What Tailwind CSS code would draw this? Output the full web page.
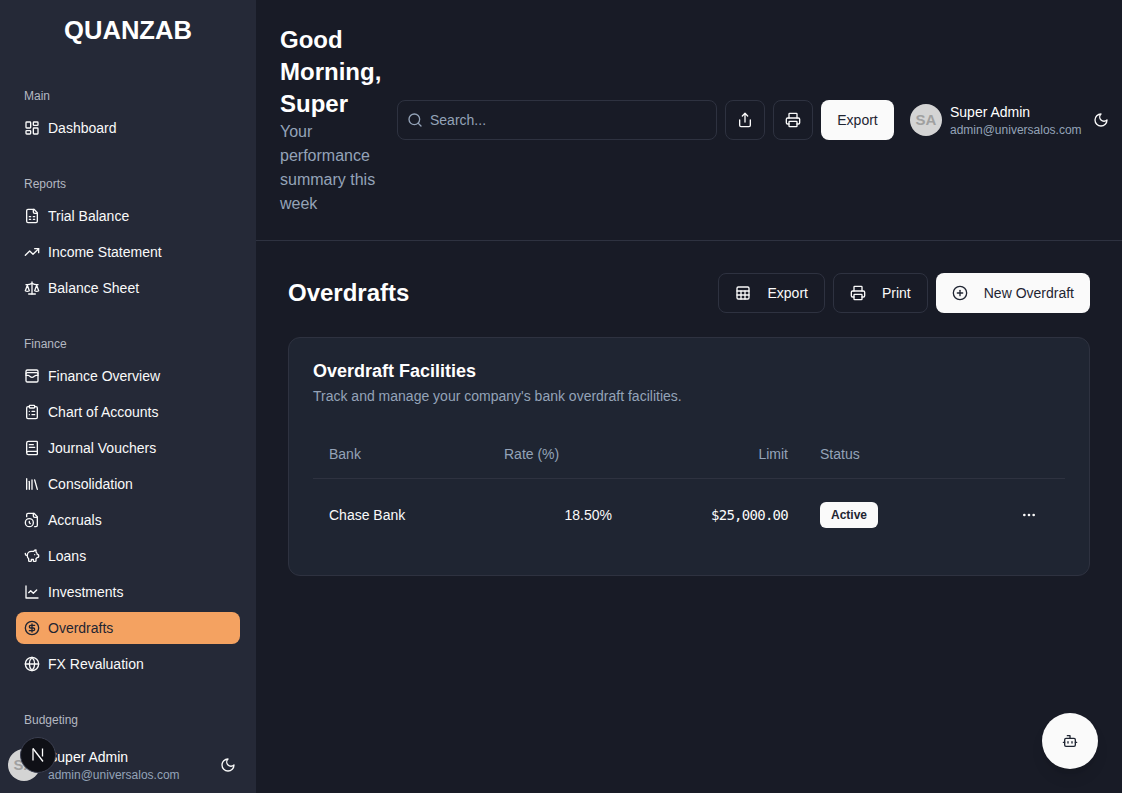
<!DOCTYPE html>
<html>

<head>
    <script src="https://cdn.jsdelivr.net/npm/@tailwindcss/browser@4"></script>
    <title>Overdrafts</title>
</head>

<body class="bg-[#181b26] font-['Liberation_Sans',sans-serif] text-[#fafafa]">
    <div class="relative flex h-[793px] w-[1122px] overflow-hidden">

        <!-- sidebar -->
        <aside class="flex h-full w-[256px] shrink-0 flex-col bg-[#252937]">
            <div class="h-[80px] shrink-0 pt-[14px] text-center text-[25.6px] font-bold leading-8 text-white">QUANZAB</div>

            <div class="flex min-h-0 flex-1 flex-col gap-6 overflow-hidden px-4">
                <div>
                    <div class="flex h-8 items-center px-2 text-xs font-medium text-[#b4b8c2]">Main</div>
                    <div class="flex flex-col gap-1">
                        <a class="flex h-8 items-center gap-2 rounded-lg px-2 text-sm font-medium">
                            <svg class="size-4" viewBox="0 0 24 24" fill="none" stroke="currentColor" stroke-width="2" stroke-linecap="round" stroke-linejoin="round"><rect width="7" height="9" x="3" y="3" rx="1"/><rect width="7" height="5" x="14" y="3" rx="1"/><rect width="7" height="9" x="14" y="12" rx="1"/><rect width="7" height="5" x="3" y="16" rx="1"/></svg>
                            Dashboard
                        </a>
                    </div>
                </div>

                <div>
                    <div class="flex h-8 items-center px-2 text-xs font-medium text-[#b4b8c2]">Reports</div>
                    <div class="flex flex-col gap-1">
                        <a class="flex h-8 items-center gap-2 rounded-lg px-2 text-sm font-medium">
                            <svg class="size-4" viewBox="0 0 24 24" fill="none" stroke="currentColor" stroke-width="2" stroke-linecap="round" stroke-linejoin="round"><path d="M15 2H6a2 2 0 0 0-2 2v16a2 2 0 0 0 2 2h12a2 2 0 0 0 2-2V7Z"/><path d="M14 2v4a2 2 0 0 0 2 2h4"/><path d="M8 13h2"/><path d="M14 13h2"/><path d="M8 17h2"/><path d="M14 17h2"/></svg>
                            Trial Balance
                        </a>
                        <a class="flex h-8 items-center gap-2 rounded-lg px-2 text-sm font-medium">
                            <svg class="size-4" viewBox="0 0 24 24" fill="none" stroke="currentColor" stroke-width="2" stroke-linecap="round" stroke-linejoin="round"><polyline points="22 7 13.5 15.5 8.5 10.5 2 17"/><polyline points="16 7 22 7 22 13"/></svg>
                            Income Statement
                        </a>
                        <a class="flex h-8 items-center gap-2 rounded-lg px-2 text-sm font-medium">
                            <svg class="size-4" viewBox="0 0 24 24" fill="none" stroke="currentColor" stroke-width="2" stroke-linecap="round" stroke-linejoin="round"><path d="m16 16 3-8 3 8c-.87.65-1.92 1-3 1s-2.13-.35-3-1Z"/><path d="m2 16 3-8 3 8c-.87.65-1.92 1-3 1s-2.13-.35-3-1Z"/><path d="M7 21h10"/><path d="M12 3v18"/><path d="M3 7h2c2 0 5-1 7-2 2 1 5 2 7 2h2"/></svg>
                            Balance Sheet
                        </a>
                    </div>
                </div>

                <div>
                    <div class="flex h-8 items-center px-2 text-xs font-medium text-[#b4b8c2]">Finance</div>
                    <div class="flex flex-col gap-1">
                        <a class="flex h-8 items-center gap-2 rounded-lg px-2 text-sm font-medium">
                            <svg class="size-4" viewBox="0 0 24 24" fill="none" stroke="currentColor" stroke-width="2" stroke-linecap="round" stroke-linejoin="round"><rect width="18" height="18" x="3" y="3" rx="2"/><path d="M3 9a2 2 0 0 1 2-2h14a2 2 0 0 1 2 2"/><path d="M3 11h3c.8 0 1.6.3 2.1.9l1.1.9c1.6 1.6 4.1 1.6 5.7 0l1.1-.9c.5-.5 1.3-.9 2.1-.9H21"/></svg>
                            Finance Overview
                        </a>
                        <a class="flex h-8 items-center gap-2 rounded-lg px-2 text-sm font-medium">
                            <svg class="size-4" viewBox="0 0 24 24" fill="none" stroke="currentColor" stroke-width="2" stroke-linecap="round" stroke-linejoin="round"><rect width="8" height="4" x="8" y="2" rx="1" ry="1"/><path d="M16 4h2a2 2 0 0 1 2 2v14a2 2 0 0 1-2 2H6a2 2 0 0 1-2-2V6a2 2 0 0 1 2-2h2"/><path d="M12 11h4"/><path d="M12 16h4"/><path d="M8 11h.01"/><path d="M8 16h.01"/></svg>
                            Chart of Accounts
                        </a>
                        <a class="flex h-8 items-center gap-2 rounded-lg px-2 text-sm font-medium">
                            <svg class="size-4" viewBox="0 0 24 24" fill="none" stroke="currentColor" stroke-width="2" stroke-linecap="round" stroke-linejoin="round"><path d="M4 19.5v-15A2.5 2.5 0 0 1 6.5 2H19a1 1 0 0 1 1 1v18a1 1 0 0 1-1 1H6.5a1 1 0 0 1 0-5H20"/><path d="M8 11h8"/><path d="M8 7h6"/></svg>
                            Journal Vouchers
                        </a>
                        <a class="flex h-8 items-center gap-2 rounded-lg px-2 text-sm font-medium">
                            <svg class="size-4" viewBox="0 0 24 24" fill="none" stroke="currentColor" stroke-width="2" stroke-linecap="round" stroke-linejoin="round"><path d="m16 6 4 14"/><path d="M12 6v14"/><path d="M8 8v12"/><path d="M4 4v16"/></svg>
                            Consolidation
                        </a>
                        <a class="flex h-8 items-center gap-2 rounded-lg px-2 text-sm font-medium">
                            <svg class="size-4" viewBox="0 0 24 24" fill="none" stroke="currentColor" stroke-width="2" stroke-linecap="round" stroke-linejoin="round"><path d="M16 22h2a2 2 0 0 0 2-2V7l-5-5H6a2 2 0 0 0-2 2v3"/><path d="M14 2v4a2 2 0 0 0 2 2h4"/><circle cx="8" cy="16" r="6"/><path d="M9.5 17.5 8 16.25V14"/></svg>
                            Accruals
                        </a>
                        <a class="flex h-8 items-center gap-2 rounded-lg px-2 text-sm font-medium">
                            <svg class="size-4" viewBox="0 0 24 24" fill="none" stroke="currentColor" stroke-width="2" stroke-linecap="round" stroke-linejoin="round"><path d="M11 17h3v2a1 1 0 0 0 1 1h2a1 1 0 0 0 1-1v-3a3.16 3.16 0 0 0 2-2h1a1 1 0 0 0 1-1v-2a1 1 0 0 0-1-1h-1a5 5 0 0 0-2-4V3a4 4 0 0 0-3.2 1.6l-.3.4H11a6 6 0 0 0-6 6v1a5 5 0 0 0 2 4v3a1 1 0 0 0 1 1h2a1 1 0 0 0 1-1z"/><path d="M16 10h.01"/><path d="M2 8v1a2 2 0 0 0 2 2h1"/></svg>
                            Loans
                        </a>
                        <a class="flex h-8 items-center gap-2 rounded-lg px-2 text-sm font-medium">
                            <svg class="size-4" viewBox="0 0 24 24" fill="none" stroke="currentColor" stroke-width="2" stroke-linecap="round" stroke-linejoin="round"><path d="M3 3v18h18"/><path d="m19 9-5 5-4-4-3 3"/></svg>
                            Investments
                        </a>
                        <a class="flex h-8 items-center gap-2 rounded-lg bg-[#f4a261] px-2 text-sm font-medium text-[#1f2532]">
                            <svg class="size-4" viewBox="0 0 24 24" fill="none" stroke="currentColor" stroke-width="2" stroke-linecap="round" stroke-linejoin="round"><circle cx="12" cy="12" r="10"/><path d="M16 8h-6a2 2 0 1 0 0 4h4a2 2 0 1 1 0 4H8"/><path d="M12 18V6"/></svg>
                            Overdrafts
                        </a>
                        <a class="flex h-8 items-center gap-2 rounded-lg px-2 text-sm font-medium">
                            <svg class="size-4" viewBox="0 0 24 24" fill="none" stroke="currentColor" stroke-width="2" stroke-linecap="round" stroke-linejoin="round"><circle cx="12" cy="12" r="10"/><path d="M12 2a14.5 14.5 0 0 0 0 20 14.5 14.5 0 0 0 0-20"/><path d="M2 12h20"/></svg>
                            FX Revaluation
                        </a>
                    </div>
                </div>

                <div>
                    <div class="flex h-8 items-center px-2 text-xs font-medium text-[#b4b8c2]">Budgeting</div>
                </div>
            </div>

            <!-- sidebar footer -->
            <div class="flex h-[56px] shrink-0 items-center gap-2 bg-[#252937] pl-2 pr-5">
                <div class="flex size-8 shrink-0 items-center justify-center rounded-full bg-[#d4d4d4] text-[15px] font-bold text-[#a0a0a0]">SA</div>
                <div class="min-w-0 flex-1">
                    <div class="text-sm font-medium leading-5 text-white">Super Admin</div>
                    <div class="text-xs leading-4 text-[#94a3b8]">admin@universalos.com</div>
                </div>
                <svg class="size-4 shrink-0" viewBox="0 0 24 24" fill="none" stroke="currentColor" stroke-width="2" stroke-linecap="round" stroke-linejoin="round"><path d="M12 3a6 6 0 0 0 9 9 9 9 0 1 1-9-9Z"/></svg>
            </div>
        </aside>

        <!-- main -->
        <main class="flex min-w-0 flex-1 flex-col">
            <header class="flex h-[241px] shrink-0 items-center border-b border-[#2e3240] pl-6">
                <div class="w-[101px] shrink-0">
                    <h1 class="text-2xl font-bold leading-8 text-white">Good Morning, Super</h1>
                    <p class="text-base leading-6 text-[#94a3b8]">Your performance summary this week</p>
                </div>
                <div class="ml-4 flex h-10 w-[320px] shrink-0 items-center gap-[7px] rounded-lg border border-[#2e3240] pl-[9px]">
                    <svg class="size-4 text-[#94a3b8]" viewBox="0 0 24 24" fill="none" stroke="currentColor" stroke-width="2" stroke-linecap="round" stroke-linejoin="round"><circle cx="11" cy="11" r="8"/><path d="m21 21-4.3-4.3"/></svg>
                    <span class="text-sm text-[#94a3b8]">Search...</span>
                </div>
                <button class="ml-2 flex size-10 shrink-0 items-center justify-center rounded-lg border border-[#2e3240]">
                    <svg class="size-4" viewBox="0 0 24 24" fill="none" stroke="currentColor" stroke-width="2" stroke-linecap="round" stroke-linejoin="round"><path d="M4 12v8a2 2 0 0 0 2 2h12a2 2 0 0 0 2-2v-8"/><polyline points="16 6 12 2 8 6"/><line x1="12" x2="12" y1="2" y2="15"/></svg>
                </button>
                <button class="ml-2 flex size-10 shrink-0 items-center justify-center rounded-lg border border-[#2e3240]">
                    <svg class="size-4" viewBox="0 0 24 24" fill="none" stroke="currentColor" stroke-width="2" stroke-linecap="round" stroke-linejoin="round"><path d="M6 18H4a2 2 0 0 1-2-2v-5a2 2 0 0 1 2-2h16a2 2 0 0 1 2 2v5a2 2 0 0 1-2 2h-2"/><path d="M6 9V3a1 1 0 0 1 1-1h10a1 1 0 0 1 1 1v6"/><rect x="6" y="14" width="12" height="8" rx="1"/></svg>
                </button>
                <button class="ml-2 flex h-10 w-[73px] shrink-0 items-center justify-center rounded-lg bg-[#fafafa] text-sm font-medium text-[#1f2532]">Export</button>
                <div class="ml-4 flex size-8 shrink-0 items-center justify-center rounded-full bg-[#d4d4d4] text-[15px] font-bold text-[#a0a0a0]">SA</div>
                <div class="ml-2 w-[131px] shrink-0">
                    <div class="text-sm font-medium leading-5 text-white">Super Admin</div>
                    <div class="text-xs leading-4 text-[#94a3b8]">admin@universalos.com</div>
                </div>
                <svg class="ml-3 size-4 shrink-0" viewBox="0 0 24 24" fill="none" stroke="currentColor" stroke-width="2" stroke-linecap="round" stroke-linejoin="round"><path d="M12 3a6 6 0 0 0 9 9 9 9 0 1 1-9-9Z"/></svg>
            </header>

            <section class="flex flex-col gap-6 px-8 pt-8">
                <div class="flex items-center justify-between">
                    <h2 class="text-2xl font-bold text-white">Overdrafts</h2>
                    <div class="flex gap-2">
                        <button class="flex h-10 items-center gap-4 rounded-lg border border-[#2e3240] px-4 text-sm font-medium">
                            <svg class="size-4" viewBox="0 0 24 24" fill="none" stroke="currentColor" stroke-width="2" stroke-linecap="round" stroke-linejoin="round"><rect width="18" height="18" x="3" y="3" rx="2"/><path d="M3 9h18"/><path d="M3 15h18"/><path d="M9 9v12"/><path d="M15 9v12"/></svg>
                            Export
                        </button>
                        <button class="flex h-10 items-center gap-4 rounded-lg border border-[#2e3240] px-4 text-sm font-medium">
                            <svg class="size-4" viewBox="0 0 24 24" fill="none" stroke="currentColor" stroke-width="2" stroke-linecap="round" stroke-linejoin="round"><path d="M6 18H4a2 2 0 0 1-2-2v-5a2 2 0 0 1 2-2h16a2 2 0 0 1 2 2v5a2 2 0 0 1-2 2h-2"/><path d="M6 9V3a1 1 0 0 1 1-1h10a1 1 0 0 1 1 1v6"/><rect x="6" y="14" width="12" height="8" rx="1"/></svg>
                            Print
                        </button>
                        <button class="flex h-10 items-center gap-4 rounded-lg bg-[#fafafa] px-4 text-sm font-medium text-[#1f2532]">
                            <svg class="size-4" viewBox="0 0 24 24" fill="none" stroke="currentColor" stroke-width="2" stroke-linecap="round" stroke-linejoin="round"><circle cx="12" cy="12" r="10"/><path d="M8 12h8"/><path d="M12 8v8"/></svg>
                            New Overdraft
                        </button>
                    </div>
                </div>

                <div class="h-[239px] rounded-xl border border-[#2e3240] bg-[#1f2532] p-6">
                    <h3 class="text-lg font-semibold leading-[18px] text-white">Overdraft Facilities</h3>
                    <p class="mt-[6px] text-sm leading-5 text-[#94a3b8]">Track and manage your company's bank overdraft facilities.</p>
                    <table class="mt-[24px] w-full table-fixed text-sm">
                        <thead>
                            <tr class="h-[48px] border-b border-[#2e3240] text-[#94a3b8]">
                                <th class="w-[175px] px-4 text-left font-medium">Bank</th>
                                <th class="w-[140px] px-4 text-left font-medium">Rate (%)</th>
                                <th class="w-[176px] px-4 text-right font-medium">Limit</th>
                                <th class="px-4 text-left font-medium">Status</th>
                                <th class="w-[67px]"></th>
                            </tr>
                        </thead>
                        <tbody>
                            <tr class="h-[74px]">
                                <td class="px-4 font-medium">Chase Bank</td>
                                <td class="px-4 text-right">18.50%</td>
                                <td class="px-4 text-right font-['DejaVu_Sans_Mono',monospace] text-sm tracking-[-0.73px]">$25,000.00</td>
                                <td class="px-4">
                                    <span class="inline-flex h-[26px] items-center rounded-md bg-[#fafafa] px-[11px] text-xs font-semibold text-[#1f2532]">Active</span>
                                </td>
                                <td>
                                    <svg class="ml-[23px] size-4" viewBox="0 0 24 24" fill="none" stroke="currentColor" stroke-width="2" stroke-linecap="round" stroke-linejoin="round"><circle cx="12" cy="12" r="1"/><circle cx="19" cy="12" r="1"/><circle cx="5" cy="12" r="1"/></svg>
                                </td>
                            </tr>
                        </tbody>
                    </table>
                </div>
            </section>
        </main>

        <!-- dev badge and assistant button float over the page -->
        <div class="absolute bottom-[20px] left-[20px] flex size-9 items-center justify-center rounded-full border border-[#3b3f50] bg-[#0f1016]">
            <svg class="size-[18px]" viewBox="0 0 18 18" fill="none" stroke="white" stroke-width="1.3"><path d="M4 2.5v12"/><path d="M4 2.5 14 15.5"/><path d="M13.5 2.5v8"/></svg>
        </div>
        <button class="absolute bottom-[24px] right-[24px] flex size-14 items-center justify-center rounded-full bg-[#fafafa] text-[#1f2532] shadow-lg">
            <svg class="size-4" viewBox="0 0 24 24" fill="none" stroke="currentColor" stroke-width="2" stroke-linecap="round" stroke-linejoin="round"><path d="M12 8V4H8"/><rect width="16" height="12" x="4" y="8" rx="2"/><path d="M2 14h2"/><path d="M20 14h2"/><path d="M15 13v2"/><path d="M9 13v2"/></svg>
        </button>
    </div>
</body>

</html>
